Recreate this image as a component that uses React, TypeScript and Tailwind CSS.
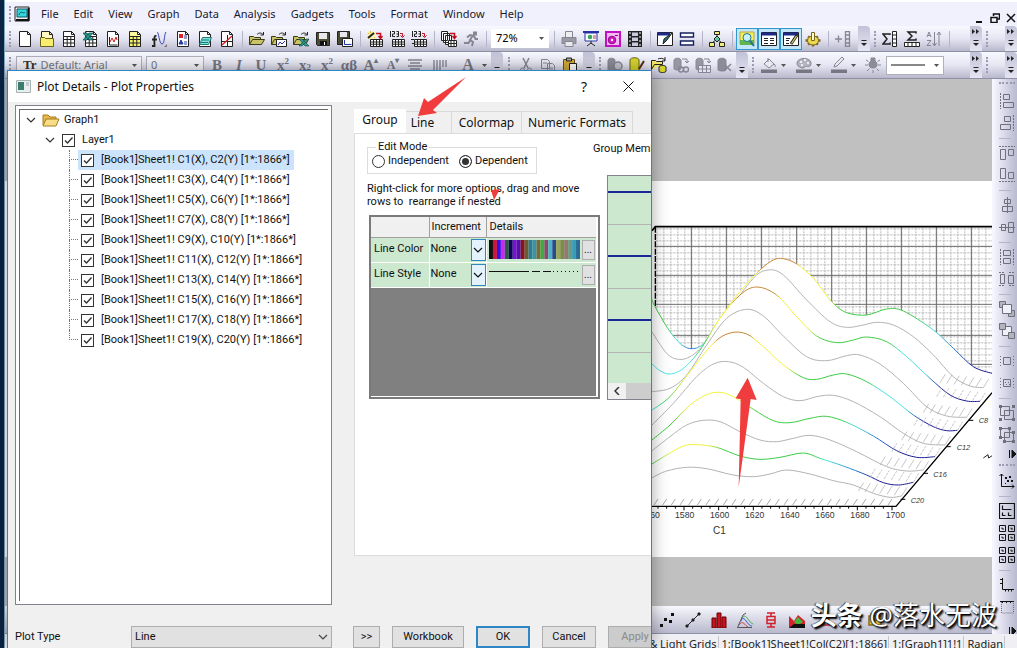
import { ReactNode } from "react";
import { twMerge } from "tailwind-merge";

const INK = "#222";
const DIM = "#858594";

const Icon = ({ children, size = 16 }: { children: ReactNode; size?: number }) => (
    <svg
        width={size}
        height={size}
        viewBox="0 0 16 16"
        fill="none"
        stroke={INK}
        strokeWidth="1"
        aria-hidden="true"
    >
        {children}
    </svg>
);

const Page = ({ fill = "#fff" }: { fill?: string }) => (
    <path d="M2.5.5h8l3 3v12h-11zM10.5.5v3h3" fill={fill} />
);

const Grid = ({ fill = "#fff" }: { fill?: string }) => (
    <path d="M2.5 5.5h11v10h-11zM2.5 8.5h11M2.5 12h11M6.2 5.5v10M9.8 5.5v10" fill={fill} />
);

const SmallGrid = () => (
    <path d="M3.5 8.5h12v7h-12zM3.5 11h12M3.5 13.2h12M6.5 8.5v7M9.5 8.5v7M12.5 8.5v7" fill="#fff" />
);

const RedHook = () => <path d="M9 2.5h4.5v4M11.5 5l2 2.5 2-2.5" stroke="#c01020" strokeWidth="1.5" />;

const SmallHook = () => <path d="M11 2.5h2.5v3M11.5 4.5l2 2 2-2" stroke="#c01020" />;

const Folder = () => (
    <path d="M.5 13.5v-8h4l1 1h6v2M.5 13.5l3-5h12l-3 5z" fill="#c9c46a" stroke="#3a3a14" />
);

const icons: Record<string, ReactNode> = {
    newProject: <Page />,
    newFolder: (
        <>
            <Page fill="#fff9c0" />
            <path d="M1.5 15.5v-9h4l1 1h8v8z" fill="#f7ee6d" stroke="#6b6420" />
        </>
    ),
    workbook: (
        <>
            <Page />
            <Grid />
        </>
    ),
    excel: (
        <>
            <Page />
            <Grid />
            <path d="M0 2h4l6 7H6zM6 2h4L4 9H0z" fill="#2e9a93" stroke="#0c4a48" strokeWidth=".7" />
        </>
    ),
    graph: (
        <>
            <Page />
            <path d="M4.5 6v8h8" />
            <path d="M5 11l2-4 2 4 2-5 1 3" stroke="#c22" />
        </>
    ),
    matrix: (
        <>
            <Page fill="#fbf99a" />
            <Grid fill="#f6f271" />
        </>
    ),
    fx: (
        <>
            <path d="M6 1c2 0 2 12 5 12s2-10 4-12" stroke="#3846b4" />
            <path d="M5.5 5c-3-1-2 4-2 10H1M1 8.5h5" strokeWidth="1.8" />
            <path d="M16 16v-3l-3 3z" fill="#777" stroke="none" />
        </>
    ),
    layout: (
        <>
            <Page />
            <path d="M4 3h4v4H4z" fill="#d22" stroke="none" />
            <path d="M4 13l2-4 2 4zM9 5h3M9 7h3M9 11h3M9 13h3" stroke="#22389c" fill="#22389c" />
        </>
    ),
    notes: (
        <>
            <Page />
            <path d="M5.5 6.5h9l-3 7h-9zM5 9h7M4 11.5h7" fill="#7fe3dc" stroke="#1b7c78" />
        </>
    ),
    func: (
        <>
            <Page />
            <path d="M8.5 4v11M3 10.5h10" />
            <path d="M3 14L13 5" stroke="#d22" strokeWidth="1.4" />
        </>
    ),
    open: (
        <>
            <Folder />
            <path d="M8 3.5c2-2 4-2 6 0M14.5 1v3h-3" />
        </>
    ),
    openTemplate: (
        <>
            <Folder />
            <path d="M8 3.5c2-2 4-2 6 0M14.5 1v3h-3" />
            <path d="M5.5 8.5h10v7h-10z" fill="#fff" />
            <path d="M7 14l2-3 2 2 3-3" stroke="#2233aa" />
        </>
    ),
    openExcel: (
        <>
            <Folder />
            <path d="M8 3.5c2-2 4-2 6 0M14.5 1v3h-3" />
            <path d="M6 8h3l7 7h-4zM13 8h3l-7 7H6z" fill="#2e9a93" stroke="#0c4a48" strokeWidth=".6" />
        </>
    ),
    save: (
        <>
            <path d="M1.5 1.5h13v13h-12l-1-1z" fill="#4c4c35" />
            <path d="M4 2h8v6H4z" fill="#e8e8ee" stroke="none" />
            <path d="M5 10h7v4H5z" fill="#111" stroke="none" />
            <path d="M9.5 11v3" stroke="#fff" />
        </>
    ),
    saveTemplate: (
        <>
            <path d="M.5.5h12v13h-12z" fill="#4c4c35" />
            <path d="M3 1h7v5H3z" fill="#e8e8ee" stroke="none" />
            <path d="M5.5 7.5h10v8h-10z" fill="#fff" />
            <path d="M7.5 9v4.5h7" stroke="#2233aa" />
        </>
    ),
    wizard: (
        <>
            <path d="M0 1h9v7H0z" fill="#fbf0b0" stroke="none" />
            <path d="M1 7L7 2" strokeWidth="2" />
            <path d="M1 2l1 1M7 6l1 1M3.5 0v2" stroke="#e0b52a" />
            <SmallGrid />
            <RedHook />
        </>
    ),
    ascii: (
        <>
            <path d="M1.5 0v6M3 .5h2.500v2.500H3.500v2.500h2.500M7.500.5h2v5h-2M7.500 3h2" />
            <SmallGrid />
            <SmallHook />
        </>
    ),
    asciiMulti: (
        <>
            <path d="M1.5 0v6M3 .5h2.500v2.500H3.500v2.500h2.500M7.500.5h2v5h-2M7.500 3h2" />
            <SmallGrid />
            <path d="M0 8.5h3M1 12.5h2" />
            <SmallHook />
        </>
    ),
    batch: (
        <>
            <path d="M.5.5h6v9h-6zM2.5 2.5h6v9h-6zM4.5 4.5h6v9h-6z" fill="#fff" />
            <path d="M7.5 9.5h8v6h-8zM7.5 12.5h8M10 9.5v6M13 9.5v6" fill="#fff" />
            <RedHook />
        </>
    ),
    run: (
        <path
            d="M11 1.5h2v2h-2zM11 5L7 4 4 6.5M9.5 5L7 9l3 2-1 4M7.5 9l-2 3H1M11 5l1.5 3H15"
            stroke={DIM}
            strokeWidth="2"
        />
    ),
    print: (
        <>
            <path d="M4.5 6V.5h7V6" fill="#eee" stroke={DIM} />
            <path d="M1 6.5h14v6H1z" fill="#9a9aa6" stroke={DIM} />
            <path d="M4 10.5h8v5H4z" fill="#e8e8ee" stroke={DIM} />
        </>
    ),
    slide: (
        <>
            <path d="M0 1h16" stroke="#2730a8" strokeWidth="2" />
            <path d="M2 2h12v8H2z" fill="#fff" stroke="#2730a8" />
            <circle cx="7" cy="6" r="2.3" fill="#39a85c" stroke="none" />
            <path d="M10 5h3M10 7h3" stroke="#c33" />
            <path d="M8 10v3M4 15l4-3 4 3" />
        </>
    ),
    record: (
        <>
            <path d="M1 1h14v14H1z" fill="#f8b8f4" stroke="#c211c2" strokeWidth="2" />
            <circle cx="7" cy="9" r="3.8" fill="#d415c8" stroke="#8a0a85" />
            <circle cx="7" cy="9" r="1.2" fill="#fff" stroke="none" />
            <path d="M10 4.5h3" stroke="#8a0a85" />
        </>
    ),
    film: (
        <>
            <path d="M1 0h14v16H1z" fill="#222" stroke="none" />
            <path d="M5 1.5h6v3.5H5zM5 6.5h6V10H5zM5 11.5h6V15H5z" fill="#c9c9e0" stroke="none" />
            <path d="M3 1v14M13 1v14" stroke="#fff" strokeDasharray="2 2" />
        </>
    ),
    script: (
        <>
            <path d="M.5 1.5h15v13H.5z" fill="#fff" />
            <path d="M1 3h12" stroke="#1d2b88" strokeWidth="3" />
            <path d="M15 2l-5 7-4 4 1-5z" fill="#2b6a74" />
        </>
    ),
    rows: (
        <path d="M1.5 2h13v4h-13zM1.5 10h13v4h-13z" fill="#fff" stroke="#15205e" strokeWidth="1.4" />
    ),
    tree: (
        <>
            <path d="M8 4v4L3 12M8 8l5 4" />
            <path d="M5.5.5h5v3h-5z" fill="#f4ee74" />
            <path d="M8 5l3 3-3 3-3-3z" fill="#5fcfa8" />
            <path d="M.5 11.5h5v4h-5zM10.5 11.5h5v4h-5z" fill="#eff07a" />
        </>
    ),
    finder: (
        <>
            <path d="M1 1h14v12H1z" fill="#f4ef5c" stroke="#b7aa3a" />
            <path d="M1 9h14v5H1z" fill="#61b54e" stroke="none" />
            <circle cx="8" cy="6.5" r="4" fill="#c6f3fb" stroke="#217488" />
            <path d="M11 10l4 5" stroke="#217488" strokeWidth="2" />
        </>
    ),
    results: (
        <>
            <path d="M.5 1.5h15v13H.5z" fill="#fff" />
            <path d="M1 3h14" stroke="#1d2b88" strokeWidth="3" />
            <path d="M3 7.5h4M9 7.5h4M3 9.5h4M9 9.5h4M3 12.5h4M9 12.5h4" />
        </>
    ),
    command: (
        <>
            <path d="M.5 1.5h15v13H.5z" fill="#fff" />
            <path d="M1 3h14" stroke="#1d2b88" strokeWidth="3" />
            <path d="M3 7.5h4M3 9.5h3M3 12.5h3" />
            <path d="M14 4l-6 9" stroke="#222" strokeWidth="3" />
            <path d="M13.5 5l-5 7.5" stroke="#e8dc66" strokeWidth="1.2" />
        </>
    ),
    gear: (
        <>
            <path
                d="M8 4v2M3 5.500l2 1.500M13 5.500l-2 1.500M.5 9.500H3M13 9.500h2.500M3 13.500l2-1.500M13 13.500l-2-1.500M8 13v2.500"
                stroke="#7b661d"
                strokeWidth="2.500"
            />
            <ellipse cx="8" cy="9.5" rx="5.5" ry="4.5" fill="#ecd94f" stroke="#7b661d" />
            <path d="M6.500 1.500h3v8h-3z" fill="#fff8c4" stroke="#7b661d" />
        </>
    ),
    addColumn: (
        <path d="M0 8h7M3.5 4.5v7M10.5.5h4v15h-4zM10.5 4h4M10.5 8h4M10.5 12h4" stroke={DIM} strokeWidth="1.3" />
    ),
    sumColumn: (
        <>
            <path d="M8 4V3H1l4 5-4 5h7v-1.5" strokeWidth="1.5" />
            <path d="M10.5.5h4v15h-4zM10.5 4h4M10.5 8h4M10.5 12h4" fill="#fff" />
        </>
    ),
    sumRow: (
        <>
            <path d="M12 2.5V1H4l4 4-4 4h8V7.5" strokeWidth="1.5" />
            <path d="M.5 11.5h15v4H.5zM4 11.5v4M8 11.5v4M12 11.5v4" fill="#fff" />
        </>
    ),
    sort: (
        <path d="M1 6l2-5 2 5M2 4.5h2M1 9.5h4l-4 5h4M8.5 1v13M6.5 12l2 3 2-3M13 15V1M11 4l2-3 2 3" stroke={DIM} />
    ),
    align: <path d="M1 3h14M3 6h10M1 9h14M3 12h10" stroke={DIM} strokeWidth="1.4" />,
    bars: <path d="M2 3v10M5 3v10M8 3v10M11 3v7M14 3v7" stroke={DIM} strokeWidth="1.4" />,
    cut: (
        <>
            <path d="M5 1l5 10M11 1L6 11" stroke={DIM} strokeWidth="1.5" />
            <circle cx="4.5" cy="13" r="2" stroke={DIM} />
            <circle cx="11.5" cy="13" r="2" stroke={DIM} />
        </>
    ),
    copy: (
        <path d="M1.5 2.5h6l2 2v7h-8zM7.5 6.5h5l2 2v7h-7zM3 6h4M9 11h4M9 13h4" stroke={DIM} />
    ),
    paste: (
        <>
            <path d="M1.5 2.5h11v12h-11z" fill="#d4ab35" stroke="#6c5417" />
            <path d="M4.5 1h5v3h-5z" fill="#aaa" />
            <path d="M7.5 6.5h7v9h-7z" fill="#fff" />
        </>
    ),
    dbGear: (
        <>
            <path d="M1 3.5c0-3 7-3 7 0v9c0 2-7 2-7 0z" fill="#8c8c99" stroke={DIM} />
            <circle cx="11" cy="9" r="4" fill="#c6c6d2" stroke={DIM} strokeWidth="1.5" />
        </>
    ),
    dbEdit: (
        <>
            <path d="M1 3c0-3 9-3 9 0v10c0 2-9 2-9 0z" fill="#d8d42d" stroke="#67631a" />
            <path d="M15 4l-5 8" stroke="#5b2b16" strokeWidth="2" />
        </>
    ),
    dbOpen: (
        <>
            <path d="M.5 12.5v-9h4l1 1h6v3" fill="#f3e967" />
            <path d="M.5 12.5l3-5h8" fill="#f3e967" />
            <path d="M8 10c0-2 7-2 7 0v4c0 2-7 2-7 0z" fill="#d8d42d" />
            <path d="M7 2c2-1 5-1 7 1M14 0v4h-3" />
        </>
    ),
    dbView: (
        <>
            <path d="M1 3.5c0-3 7-3 7 0v8c0 2-7 2-7 0z" fill="#9797a3" stroke={DIM} />
            <path d="M9 2h5v4M12 4l2 2 2-2" stroke={DIM} />
            <circle cx="8" cy="12.5" r="2.500" stroke={DIM} strokeWidth="1.4" />
            <circle cx="13" cy="12.5" r="2.500" stroke={DIM} strokeWidth="1.4" />
        </>
    ),
    dbGrid: (
        <>
            <path d="M1 3.5c0-3 7-3 7 0v8c0 2-7 2-7 0z" fill="#9797a3" stroke={DIM} />
            <path d="M9 2h5v4M12 4l2 2 2-2" stroke={DIM} />
            <path d="M3.5 8.5h12v7h-12zM3.5 12h12M7.5 8.5v7M11.5 8.5v7" stroke={DIM} fill="#e4e4ee" />
        </>
    ),
    dbCut: (
        <>
            <path d="M1 3.5c0-3 8-3 8 0v9c0 2-8 2-8 0z" fill="#8c8c99" stroke={DIM} />
            <path d="M14 7l-7 7M8 8l6 6" stroke={DIM} strokeWidth="1.5" />
        </>
    ),
    bucket: (
        <>
            <path d="M3 7l5-5 5 5-5 4zM7 1v4M13 7c2 1 1 3 1 3" stroke={DIM} fill="#e8e8f0" />
            <path d="M0 12.5h16v3.5H0z" fill="#777783" stroke="none" />
        </>
    ),
    palette: (
        <>
            <path d="M1 6c0-6 14-6 14 0s-5 2-6 4-8 1-8-4z" fill="#b4b4c0" stroke={DIM} />
            <path d="M4 5h2M8 3h2M11 6h2M5 8h2" stroke="#fff" strokeWidth="1.5" />
            <path d="M0 12.5h16v3.5H0z" fill="#777783" stroke="none" />
        </>
    ),
    pen: (
        <>
            <path d="M3 10l1-3 7-7 2 2-7 7z" stroke={DIM} fill="#e8e8f0" />
            <path d="M0 12.5h16v3.5H0z" fill="#777783" stroke="none" />
        </>
    ),
    bulb: (
        <>
            <path d="M6 4V1h4v3c3 2 3 7-2 7S3 6 6 4z" fill="#8c8c99" stroke={DIM} />
            <path d="M8 13v3M0 8h3M13 8h3M1 3l2.5 1.5M15 3l-2.5 1.5M2 14l2.5-2.5M14 14l-2.5-2.5" stroke={DIM} />
        </>
    ),
};

const side: Record<string, ReactNode> = {
    left: (
        <>
            <path d="M1.5 0v16" strokeDasharray="2 1" />
            <path d="M4.5 1.5h6v5h-6zM4.5 9.5h10v5h-10z" />
        </>
    ),
    right: (
        <>
            <path d="M14.5 0v16" strokeDasharray="2 1" />
            <path d="M5.5 1.5h6v5h-6zM1.5 9.5h10v5h-10z" />
        </>
    ),
    top: (
        <>
            <path d="M0 1.5h16" strokeDasharray="2 1" />
            <path d="M1.5 4.5h5v10h-5zM9.5 4.5h5v6h-5z" />
        </>
    ),
    bottom: (
        <>
            <path d="M0 14.5h16" strokeDasharray="2 1" />
            <path d="M1.5 1.5h5v10h-5zM9.5 5.5h5v6h-5z" />
        </>
    ),
    centerV: <path d="M8.5 0v16M5.5 2.5h6v4h-6zM3.5 9.5h10v5h-10z" />,
    centerH: <path d="M0 8.5h16M2.5 5.5h4v6h-4zM9.5 3.5h5v10h-5z" />,
    sameW: (
        <>
            <path d="M1.5 0v16M14.5 0v16" strokeDasharray="2 1" />
            <path d="M4.5 1.5h7v5h-7zM4.5 9.5h7v5h-7z" />
        </>
    ),
    sameH: (
        <>
            <path d="M0 1.5h6M10 1.5h6M0 14.5h6M10 14.500h6" strokeDasharray="2 1" />
            <path d="M1.5 3.5h4v9h-4zM9.5 4.5h5v8h-5z" />
        </>
    ),
    front: (
        <>
            <path d="M.5.5h6v6h-6zM9.5 9.5h6v6h-6z" fill="#b3b3bd" />
            <path d="M3.5 3.5h9v9h-9z" fill="#f0f0fa" />
        </>
    ),
    back: (
        <>
            <path d="M3.5 3.5h9v9h-9z" fill="#f0f0fa" />
            <path d="M.5.5h6v6h-6zM9.5 9.5h6v6h-6z" fill="#b3b3bd" />
        </>
    ),
    rect: (
        <>
            <path d="M4.5 4.5h7v7h-7z" />
            <path d="M1.5 3v12M14.5 3v12" strokeDasharray="1 2" />
        </>
    ),
    rectDots: (
        <>
            <path d="M4.5 4.5h7v7h-7z" />
            <path d="M6 7.5h4M7 9.5h4M1.5 3v12M14.5 3v12" strokeDasharray="1 2" />
        </>
    ),
    group: (
        <>
            <path d="M1.5 1.5h9v9h-9zM5.5 5.5h9v9h-9z" />
            <path d="M0 0h3v3H0zM13 0h3v3h-3zM0 13h3v3H0zM13 13h3v3h-3z" fill="#70707c" stroke="none" />
        </>
    ),
    ungroup: (
        <>
            <path d="M1.5 1.5h9v9h-9zM5.5 5.5h9v9h-9z" />
            <path d="M0 0h3v3H0zM9 0h3v3H9zM0 9h3v3H0zM13 4h3v3h-3zM4 13h3v3H4zM13 13h3v3h-3z" fill="#70707c" stroke="none" />
        </>
    ),
    rescale: (
        <>
            <path d="M2.5 1v12.5H15M.5 3l2-2 2 2M13 11.5l2 2-2 2" stroke="#111" />
            <path d="M6 4h2v2H6zM10 3h2v2h-2zM8 7h2v2H8zM12 7h2v2h-2zM6 10h1v1H6z" fill="#111" stroke="none" />
        </>
    ),
    panel1: (
        <path d="M.5.5h15v15H.5zM3.5 2.500v4h9M3.5 9.500v3h3M9.5 9.500v3h3" stroke="#111" strokeWidth="1.2" />
    ),
    panel4: (
        <path
            d="M.5.5h6v6h-6zM9.5.5h6v6h-6zM.5 9.5h6v6h-6zM9.5 9.5h6v6h-6zM3 2.500v1.500h2M12 2.500v1.500h2M3 11.500v1.500h2M12 11.500v1.500h2"
            stroke="#111"
        />
    ),
    axisL: <path d="M3.5 1v11.5H15M3.5 2.5H1M3.5 6.5H1M6.5 12.5v2M9.5 12.5v2M12.5 12.5v2" stroke="#111" />,
    axisBox: (
        <>
            <path d="M1 2.5h14M3.5 2v2M7.5 2v2M11.5 2v2" stroke="#111" />
            <path d="M2.5 3v11h12V3" strokeDasharray="1 1" />
        </>
    ),
};

const plots: { name: string; art: ReactNode }[] = [
    { name: "Scatter", art: <path d="M1 12h3v3H1zM5 6h3v3H5zM10 8h3v3h-3zM12 1h3v3h-3z" fill="#111" stroke="none" /> },
    { name: "Line + Symbol", art: <path d="M2 14l6-6 6-6M1 13h2v2H1zM7 7h2v2H7zM13 1h2v2h-2z" fill="#111" /> },
    { name: "Column", art: <path d="M1 6h4v10H1zM6 1h4v15H6zM11 5h4v11h-4z" fill="#c81420" stroke="#600" /> },
    {
        name: "3D Waterfall",
        art: (
            <>
                <path d="M.5 15.5L6 3l3-2M.5 15.5H15" stroke="#555" />
                <path d="M4 9c3-8 6 5 11 5" stroke="#3b59c9" />
                <path d="M5 6c4-6 6 4 11 6" stroke="#3cae4f" />
                <path d="M2 13c4-6 6 1 9 2" stroke="#c44" />
            </>
        ),
    },
    { name: "Box Chart", art: <path d="M4 1h8M8 1v3M4 4.5h8v7H4zM4 8h8M8 11.5V15M4 15h8" stroke="#d0202c" strokeWidth="1.5" /> },
    {
        name: "Area",
        art: (
            <>
                <path d="M0 16V4l5 5 4-6 7 6v7z" fill="#d81f2a" stroke="none" />
                <path d="M5 10l4-5 5 5-5 3z" fill="#40b83c" stroke="none" />
                <path d="M0 16l5-4h11v4z" fill="#111" stroke="none" />
            </>
        ),
    },
    { name: "Contour", art: <path d="M3 13L13 3l2 10zM3 13H1" stroke="#d0202c" strokeWidth="1.5" /> },
    { name: "Vector", art: <path d="M4 2l9 7-4 1 2 5-3-4-4 2z" fill="#d0202c" stroke="#d0202c" /> },
    { name: "Image", art: <path d="M2 4h12v9H2zM4 4V1M12 4V1M8 6v5M5 8h6" stroke="#8d6a10" fill="#e8c637" strokeWidth="1.5" /> },
];

const Tool = ({ name, className, children }: { name: string; className?: string; children?: ReactNode }) => (
    <button
        aria-label={name}
        className={twMerge("flex h-6 w-[22px] shrink-0 items-center justify-center", className)}
    >
        {children ?? <Icon>{icons[name]}</Icon>}
    </button>
);

const Sep = () => (
    <span className="flex w-2 shrink-0 justify-center">
        <span className="h-4 w-px bg-[#b4b4c8]" />
    </span>
);

const Grip = ({ className }: { className?: string }) => (
    <span className={twMerge("flex w-[9px] shrink-0 justify-center", className)}>
        <span className="h-4 border-l-2 border-dotted border-[#9a9ab4]" />
    </span>
);

const Cap = ({ more, className }: { more?: boolean; className?: string }) => (
    <span
        className={twMerge(
            "flex w-3 shrink-0 flex-col items-center justify-end self-stretch rounded-tr-sm bg-gradient-to-b from-[#c3c3d8] to-[#e4e4f2] pb-1",
            className
        )}
    >
        <svg width="8" height="18" viewBox="0 0 8 18" aria-hidden="true">
            {more && <path d="M0 0l3 2.5L0 5M4 0l3 2.5L4 5" fill="#222" />}
            <path d="M1.5 11.5h5" stroke="#222" />
            <path d="M1 14h6l-3 3z" fill="#222" />
        </svg>
    </span>
);

const Caret = () => (
    <svg width="5" height="3" viewBox="0 0 5 3" className="pointer-events-none shrink-0" aria-hidden="true">
        <path d="M0 0h5L2.5 3z" fill="#555" />
    </svg>
);

const Combo = ({ label, value, className }: { label: string; value: string; className?: string }) => (
    <span className={twMerge("relative flex h-[19px] shrink-0 items-center border border-[#b0b0bc] bg-[#f4f4fa]", className)}>
        <select aria-label={label} className="h-full w-full appearance-none bg-transparent px-1 outline-none">
            <option>{value}</option>
        </select>
        <span className="pointer-events-none absolute inset-y-0 right-1 flex items-center">
            <Caret />
        </span>
    </span>
);

const menus = ["File", "Edit", "View", "Graph", "Data", "Analysis", "Gadgets", "Tools", "Format", "Window", "Help"];

const MenuBar = () => (
    <nav className="flex h-6 shrink-0 items-center bg-[#f1f1fe] text-[11px] text-[#1a1a2a]">
        <Grip />
        <svg width="16" height="16" viewBox="0 0 16 16" className="mr-[11px]" aria-hidden="true">
            <path d="M1 1h14v14H1z" fill="#eee" stroke="#222" />
            <path d="M3 3h10v8H3z" fill="#37d5dc" stroke="#0d5b66" />
            <path d="M5 9c2-6 4 0 6-3" fill="none" stroke="#0d5b66" />
            <path d="M2 14h13M14.5 2v13" stroke="#111" strokeWidth="2" />
        </svg>
        <ul className="flex gap-[15px]">
            {menus.map((m) => (
                <li key={m}>
                    <button>{m}</button>
                </li>
            ))}
        </ul>
        <div className="ml-auto flex gap-1 self-end">
            <Tool name="Minimize" className="h-4 w-3">
                <svg width="10" height="10" viewBox="0 0 10 10"><path d="M2 9h6" stroke="#111" strokeWidth="2" /></svg>
            </Tool>
            <Tool name="Restore" className="h-4 w-3">
                <svg width="10" height="10" viewBox="0 0 10 10"><path d="M3.5 3V1h6v5h-2M1 4.5h6v5H1z" fill="none" stroke="#111" strokeWidth="1.5" /></svg>
            </Tool>
            <Tool name="Close" className="h-4 w-3">
                <svg width="10" height="10" viewBox="0 0 10 10"><path d="M1 1l8 8M9 1L1 9" stroke="#111" strokeWidth="1.5" /></svg>
            </Tool>
        </div>
    </nav>
);

const barStyle =
    "flex shrink-0 items-center overflow-hidden border-b border-[#8f8fa6] bg-gradient-to-b from-[#f8f8ff] via-[#e6e6f3] to-[#b9b9cd]";

const StandardBar = () => (
    <div className={twMerge(barStyle, "h-[26px]")}>
        <Grip />
        {["newProject", "newFolder", "workbook", "excel", "graph", "matrix"].map((n) => (
            <Tool key={n} name={n} />
        ))}
        <Tool name="fx" className="w-[26px]" />
        {["layout", "notes", "func"].map((n) => (
            <Tool key={n} name={n} />
        ))}
        <Sep />
        {["open", "openTemplate", "openExcel", "save", "saveTemplate"].map((n) => (
            <Tool key={n} name={n} />
        ))}
        <Sep />
        {["wizard", "ascii", "asciiMulti"].map((n) => (
            <Tool key={n} name={n} />
        ))}
        <Sep />
        {["batch", "run"].map((n) => (
            <Tool key={n} name={n} />
        ))}
        <Sep />
        <Combo label="Zoom" value="72%" className="mx-px w-[58px] border-transparent bg-white text-[11px]" />
        <Sep />
        {["print", "slide", "record", "film"].map((n) => (
            <Tool key={n} name={n} />
        ))}
        <Sep />
        <Tool name="script" />
        <Tool name="rows" />
        <Sep />
        <Tool name="tree" />
        <Sep />
        {["finder", "results", "command"].map((n) => (
            <Tool key={n} name={n} className="h-[22px] border border-[#3399cc] bg-[#c5e6f8]" />
        ))}
        <Tool name="gear" />
        <Sep />
        <Tool name="addColumn" />
        <Cap className="ml-1" />
        <Grip />
        {["sumColumn", "sumRow", "sort"].map((n) => (
            <Tool key={n} name={n} />
        ))}
        <Sep />
        <Cap more className="ml-auto" />
        <Grip className="mr-[14px]" />
        <Cap more />
    </div>
);

const FormatBar = () => (
    <div className={twMerge(barStyle, "h-[27px] text-[#777783]")}>
        <Grip />
        <span className="relative ml-[2px] flex h-[19px] w-[126px] shrink-0 items-center border border-[#b0b0bc] bg-[#f4f4fa] pl-[6px]">
            <span className="font-['Liberation_Serif',serif] text-[13px] font-bold text-[#333]">Tr</span>
            <select aria-label="Font" className="h-full w-full appearance-none bg-transparent pl-1 text-[11px] outline-none">
                <option>Default: Arial</option>
            </select>
            <span className="pointer-events-none absolute inset-y-0 right-1 flex items-center">
                <Caret />
            </span>
        </span>
        <Combo label="Font size" value="0" className="mr-[2px] ml-1 w-[58px] text-[11px]" />
        <div className="flex font-['Liberation_Serif',serif] text-[15px] leading-none font-bold">
            <Tool name="Bold">B</Tool>
            <Tool name="Italic" className="italic">I</Tool>
            <Tool name="Underline" className="underline">U</Tool>
            <Tool name="Superscript">x<sup className="text-[9px]">2</sup></Tool>
            <Tool name="Subscript">x<sub className="text-[9px]">2</sub></Tool>
            <Tool name="Superscript and Subscript">x<sup className="text-[9px]">2</sup></Tool>
            <Tool name="Greek">αβ</Tool>
            <Tool name="Increase Font">A<sup className="text-[8px]">▴</sup></Tool>
            <Tool name="Decrease Font" className="text-[12px]">A<sup className="text-[8px]">▾</sup></Tool>
        </div>
        <Tool name="align" />
        <Tool name="bars" className="w-[28px]" />
        <Tool name="Font Color" className="w-[28px] font-['Liberation_Serif',serif] text-[16px] leading-none font-bold">
            A
        </Tool>
        <Caret />
        <Cap className="ml-1" />
        <Grip className="w-3" />
        {["cut", "copy", "paste"].map((n) => (
            <Tool key={n} name={n} />
        ))}
        <Cap className="ml-[2px]" />
        <Grip />
        {["dbGear", "dbEdit", "dbOpen", "dbView", "dbGrid", "dbCut"].map((n) => (
            <Tool key={n} name={n} />
        ))}
        <Cap />
        <Grip />
        {["bucket", "palette", "pen"].map((n) => (
            <span key={n} className="flex w-[35px] shrink-0 items-center">
                <Tool name={n} className="w-6" />
                <Caret />
            </span>
        ))}
        <Tool name="bulb" />
        <span className="relative ml-[2px] flex h-[19px] w-[58px] shrink-0 items-center justify-between border border-[#b0b0bc] bg-white px-1">
            <svg width="34" height="2" aria-hidden="true"><path d="M0 1h34" stroke="#111" /></svg>
            <Caret />
        </span>
        <Cap more className="ml-auto" />
        <Grip className="mr-[14px]" />
        <Cap more />
    </div>
);

type Pt = [number, number];

// Catmull-Rom through the sample points
const smooth = (p: Pt[]) => {
    let d = `M${p[0][0]} ${p[0][1]}`;
    for (let i = 0; i < p.length - 1; i++) {
        const a = p[i - 1] ?? p[i];
        const b = p[i];
        const c = p[i + 1];
        const e = p[i + 2] ?? c;
        d += `C${b[0] + (c[0] - a[0]) / 6} ${b[1] + (c[1] - a[1]) / 6} ${c[0] - (e[0] - b[0]) / 6} ${
            c[1] - (e[1] - b[1]) / 6
        } ${c[0]} ${c[1]}`;
    }
    return d;
};

type Curve = { pts: Pt[]; stops?: [number, string][] };

const GREEN = "#3ccc44";
const YELLOW = "#f2f23c";
const ORANGE = "#c98534";
const CYAN = "#4ce4e4";
const NAVY = "#1c1c94";

const curves: Curve[] = [
    {
        pts: [[36, 268], [45, 290], [90, 365], [130, 408], [165, 415], [195, 395], [240, 325], [300, 245], [360, 180], [400, 150], [430, 146], [470, 162], [520, 205], [575, 275], [620, 308], [680, 315], [740, 297], [790, 303], [880, 360], [940, 415], [1000, 470], [1056, 490]],
        stops: [[36, GREEN], [75, GREEN], [110, CYAN], [155, "#2b66c8"], [190, CYAN], [210, GREEN], [240, YELLOW], [345, YELLOW], [365, ORANGE], [465, ORANGE], [480, YELLOW], [560, YELLOW], [600, GREEN], [820, GREEN], [880, CYAN], [940, "#2e86d0"], [1000, NAVY]],
    },
    {
        pts: [[36, 366], [80, 430], [115, 448], [150, 440], [190, 405], [260, 310], [340, 205], [385, 180], [430, 195], [500, 270], [570, 335], [620, 352], [670, 345], [710, 337], [760, 345], [820, 380], [880, 435], [940, 500], [990, 528], [1030, 533]],
    },
    {
        pts: [[36, 462], [60, 482], [90, 492], [130, 475], [180, 420], [240, 325], [300, 255], [350, 231], [410, 255], [470, 320], [530, 378], [590, 398], [640, 390], [680, 381], [740, 395], [800, 440], [870, 505], [930, 555], [980, 573], [1020, 574]],
        stops: [[36, CYAN], [150, CYAN], [190, GREEN], [225, YELLOW], [270, YELLOW], [285, ORANGE], [405, ORANGE], [425, YELLOW], [500, YELLOW], [540, GREEN], [740, GREEN], [790, CYAN], [850, CYAN], [900, NAVY]],
    },
    {
        pts: [[36, 545], [90, 535], [140, 495], [200, 405], [260, 325], [320, 298], [370, 318], [430, 378], [500, 440], [560, 452], [620, 437], [660, 435], [720, 462], [790, 520], [860, 590], [920, 618], [980, 622]],
    },
    {
        pts: [[36, 600], [90, 560], [150, 485], [220, 400], [270, 369], [320, 372], [370, 410], [430, 465], [490, 503], [530, 508], [580, 495], [620, 492], [680, 515], [750, 560], [820, 615], [880, 650], [920, 662], [952, 661]],
        stops: [[36, CYAN], [80, GREEN], [140, YELLOW], [215, YELLOW], [235, ORANGE], [330, ORANGE], [345, YELLOW], [440, YELLOW], [480, GREEN], [680, GREEN], [720, CYAN], [790, CYAN], [850, NAVY]],
    },
    {
        pts: [[36, 645], [100, 580], [170, 500], [220, 462], [265, 455], [310, 472], [370, 520], [430, 560], [480, 572], [530, 560], [580, 556], [640, 575], [720, 620], [790, 670], [850, 700], [915, 705]],
    },
    {
        pts: [[36, 690], [90, 645], [150, 585], [200, 554], [240, 547], [280, 560], [340, 598], [400, 632], [450, 638], [510, 625], [560, 619], [620, 637], [700, 678], [770, 722], [830, 742], [885, 740]],
        stops: [[36, GREEN], [100, GREEN], [140, YELLOW], [300, YELLOW], [350, GREEN], [600, GREEN], [650, CYAN], [720, "#2b66c8"], [780, NAVY]],
    },
    {
        pts: [[36, 722], [90, 680], [140, 645], [190, 631], [240, 635], [300, 665], [360, 690], [410, 695], [460, 685], [510, 676], [570, 690], [650, 725], [740, 770], [800, 783], [850, 780]],
    },
    {
        pts: [[36, 762], [80, 735], [130, 708], [170, 704], [230, 712], [300, 738], [360, 748], [420, 742], [490, 729], [540, 745], [610, 768], [680, 795], [730, 818], [775, 825], [820, 817]],
        stops: [[36, GREEN], [90, YELLOW], [200, YELLOW], [250, GREEN], [520, GREEN], [560, CYAN], [640, "#2b86d0"], [700, NAVY]],
    },
    {
        pts: [[36, 803], [80, 783], [140, 772], [200, 776], [280, 795], [340, 800], [390, 792], [440, 780], [510, 792], [580, 812], [640, 825], [700, 850], [750, 862], [785, 858]],
    },
];

const majorX = [154, 259, 364, 470, 575, 679, 784, 889, 994];
const majorY = [109, 196, 283, 376, 463];
const xLabels: [number, string][] = [[134, "1580"], [239, "1600"], [344, "1620"], [450, "1640"], [555, "1660"], [660, "1680"], [766, "1700"]];
const zLabels: [number, number, string][] = [[1016, 640, "C8"], [950, 720, "C12"], [880, 800, "C16"], [812, 878, "C20"]];

// Three drawing units make one pixel
const Waterfall = () => (
    <svg viewBox="36 -87 1020 1128" className="h-[376px] w-[340px] shrink-0" role="img" aria-label="3D waterfall graph">
        <defs>
            <pattern id="minor" x="49" y="55" width="21" height="18" patternUnits="userSpaceOnUse">
                <path d="M1.5 0v18M0 1.5h21" stroke="#b8b8b8" strokeWidth="3" strokeDasharray="6 3" />
            </pattern>
            {curves.map(
                (c, key) =>
                    c.stops && (
                        <linearGradient key={key} id={`g${key}`} gradientUnits="userSpaceOnUse" x1="36" y1="0" x2="1056" y2="0">
                            {c.stops.map(([x, color], i) => (
                                <stop key={i} offset={(x - 36) / 1020} stopColor={color} />
                            ))}
                        </linearGradient>
                    )
            )}
        </defs>
        <path d="M46 50h1010v445H46z" fill="url(#minor)" />
        <path
            d={majorX.map((x) => `M${x} 50V480`).join("") + majorY.map((y) => `M46 ${y}H1056`).join("")}
            stroke="#6c6c6c"
            strokeWidth="3"
        />
        <path d="M36 62L46 50H1056" fill="none" stroke="#000" strokeWidth="5" />
        <path d="M46 50v242" stroke="#000" strokeWidth="4" strokeDasharray="18 4" />
        {curves.map((c, key) => {
            const d = smooth(c.pts);
            const last = c.pts[c.pts.length - 1];
            return (
                <g key={key}>
                    <path d={`${d}L${last[0]} 880H36z`} fill="#fff" />
                    <path d={d} fill="none" stroke={c.stops ? `url(#g${key})` : "#b4b4b4"} strokeWidth="3" />
                </g>
            );
        })}
        {curves.slice(1).map((c, key) => {
            const [x, y] = c.pts[c.pts.length - 1];
            return (
                <path
                    key={key}
                    d={[0, 22, 44, 66, 88, 110, 130].map((o) => `M${x - o} ${y - o / 9}l16 -26`).join("")}
                    stroke="#aaa"
                    strokeWidth="2"
                    strokeDasharray={key % 2 ? "9 3" : undefined}
                />
            );
        })}
        <path
            d={Array.from({ length: 28 }, (_, i) => `M${42 + i * 26} 885l12 -18`).join("")}
            stroke="#aaa"
            strokeWidth="3"
        />
        <path d="M36 889H768L1056 548" fill="none" stroke="#000" strokeWidth="4" />
        <path
            d={
                Array.from({ length: 28 }, (_, i) => `M${54 + i * 26} 889v${(i + 1) % 4 === 0 ? 12 : 7}`).join("") +
                "M986 631h14M918 710h14M850 790h14M782 868h14"
            }
            stroke="#000"
            strokeWidth="3"
        />
        <g fill="#333" fontSize="26" textAnchor="middle" fontFamily="Liberation Sans, sans-serif">
            <text x="45" y="924">60</text>
            {xLabels.map(([x, t]) => (
                <text key={t} x={x} y="924">{t}</text>
            ))}
            <text x="238" y="972" fontSize="30">C1</text>
        </g>
        <g fill="#333" fontSize="22" fontStyle="italic" fontFamily="Liberation Sans, sans-serif">
            {zLabels.map(([x, y, t]) => (
                <text key={t} x={x} y={y}>{t}</text>
            ))}
        </g>
        <path d="M1030 744l14 -10 2 10 12 -8" fill="none" stroke="#222" strokeWidth="3" />
        <path d="M323 503l27 67-18-3-36 265 6-264-15-3z" fill="#f03c3c" />
    </svg>
);

const sideGroups = [
    ["left", "right"],
    ["top", "bottom"],
    ["centerV", "centerH"],
    ["sameW", "sameH"],
    ["front", "back"],
    ["rect", "rectDots"],
    ["group", "ungroup"],
];

const SideIcon = ({ name }: { name: string }) => (
    <button aria-label={name} className="flex h-[22px] shrink-0 items-center">
        <svg width="16" height="16" viewBox="0 0 16 16" fill="none" stroke="#70707c" aria-hidden="true">
            {side[name]}
        </svg>
    </button>
);

const SideSep = () => (
    <span className="flex h-2 shrink-0 items-center">
        <span className="h-px w-3 bg-[#b4b4c8]" />
    </span>
);

const SideMore = () => (
    <svg width="16" height="10" viewBox="0 0 16 10" className="shrink-0 self-end" aria-hidden="true">
        <path d="M8.5 1v8M11 1v8l4-4z" stroke="#111" fill="#111" />
    </svg>
);

const SideBar = () => (
    <aside className="flex w-[25px] shrink-0 flex-col overflow-hidden border-l-2 border-[#f6f6fc] bg-gradient-to-r from-[#f4f4ff] to-[#b9b9d0] pt-[3px] pl-[5px]">
        <span className="mb-1 h-1 w-4 shrink-0 border-t-2 border-dotted border-[#9a9ab4]" />
        {sideGroups.map((g, key) => (
            <div key={key} className="flex flex-col">
                {key > 0 && <SideSep />}
                {g.map((n) => (
                    <SideIcon key={n} name={n} />
                ))}
            </div>
        ))}
        <span className="h-[3px] shrink-0" />
        <SideMore />
        <span className="mt-[5px] mb-1 h-[2px] w-4 shrink-0 border-t-2 border-dotted border-[#9a9ab4]" />
        <SideIcon name="rescale" />
        <SideSep />
        <SideIcon name="panel1" />
        <SideIcon name="panel4" />
        <SideIcon name="panel4" />
        <SideSep />
        <SideIcon name="axisL" />
        <SideIcon name="axisBox" />
        <span className="h-2 shrink-0" />
        <SideMore />
    </aside>
);

const Chevron = ({ className }: { className?: string }) => (
    <svg width="10" height="6" viewBox="0 0 10 6" className={twMerge("shrink-0", className)} aria-hidden="true">
        <path d="M1 1l4 4 4-4" fill="none" stroke="currentColor" strokeWidth="1.2" />
    </svg>
);

const Check = ({ label, selected }: { label: string; selected?: boolean }) => (
    <label className={twMerge("flex h-5 items-center gap-[7px] pr-1 pl-[3px]", selected && "bg-[#cce4fb]")}>
        <span className="grid h-[13px] w-[13px]">
            <input
                type="checkbox"
                defaultChecked
                className="peer col-start-1 row-start-1 appearance-none border border-[#333] bg-white"
            />
            <svg viewBox="0 0 13 13" className="pointer-events-none invisible col-start-1 row-start-1 peer-checked:visible" aria-hidden="true">
                <path d="M3 6.5l2.5 2.5L10.5 3.5" fill="none" stroke="#333" strokeWidth="1.4" />
            </svg>
        </span>
        <span className="whitespace-nowrap">{label}</span>
    </label>
);

const PlotTree = () => (
    <div className="w-[317px] shrink-0 border border-[#82828a] bg-white p-[3px]">
        <div className="h-full border-t border-l border-[#696969]">
            <div className="flex h-5 items-center pl-[6px]">
                <Chevron className="text-[#333]" />
                <svg width="18" height="14" viewBox="0 0 18 14" className="ml-[6px]" aria-hidden="true">
                    <path d="M1 12V2h5l2 2h6v2" fill="#e6b84a" stroke="#a67c1e" />
                    <path d="M1 13l3-7h13l-3 7z" fill="#f9dd86" stroke="#a67c1e" />
                </svg>
                <span className="ml-1">Graph1</span>
            </div>
            <div className="flex h-5 items-center pl-[25px]">
                <Chevron className="mr-1 text-[#333]" />
                <Check label="Layer1" />
            </div>
            <ul className="ml-[49px] flex flex-col">
                {Array.from({ length: 10 }).map((_, i) => (
                    <li key={i} className="flex">
                        <span className="flex w-[9px] shrink-0 flex-col">
                            <span className="h-[10px] border-b border-l border-dotted border-[#777]" />
                            {i < 9 && <span className="h-[10px] border-l border-dotted border-[#777]" />}
                        </span>
                        <Check
                            label={`[Book1]Sheet1! C${2 * i + 1}(X), C${2 * i + 2}(Y) [1*:1866*]`}
                            selected={i === 0}
                        />
                    </li>
                ))}
            </ul>
        </div>
    </div>
);

const increments = [
    "#111", "#d0143c", "#3a10e0", "#c828f0", "#2b5a4c", "#0a0a50", "#7a10d8", "#5410a8", "#8a1020", "#6e5a30", "#2f7a94", "#3a94a8", "#7a6a3a", "#42a840",
    "#8a4a6c", "#4ab4cc", "#2a4a8c", "#9aa85a", "#7c8c4c", "#96786c", "#6e9a84", "#3a9cb8", "#2a6c94",
];

const NoneSelect = ({ label }: { label: string }) => (
    <span className="relative flex h-[23px] items-center">
        <select aria-label={label} className="h-full w-full appearance-none bg-transparent pl-px outline-none">
            <option>None</option>
        </select>
        <span className="pointer-events-none absolute right-0 flex h-[22px] w-[15px] items-center justify-center border border-[#2f86c4] bg-[#e3f2fc]">
            <Chevron />
        </span>
    </span>
);

const Dots = ({ label }: { label: string }) => (
    <button aria-label={label} className="h-5 w-[13px] border border-[#adadad] bg-[#e1e1e1] text-[10px] leading-none">
        ...
    </button>
);

const GroupTable = () => (
    <div className="mt-[7px] ml-[2px] h-[184px] w-[231px] border-2 border-[#7a7a7a] bg-white pr-[2px] pb-px">
        <div className="h-full bg-[#808080]">
            <table className="w-full table-fixed border-collapse bg-[#cce8cf] text-left">
                <colgroup>
                    <col className="w-[58px]" />
                    <col className="w-[57px]" />
                    <col />
                </colgroup>
                <thead className="bg-[#f0f0f0]">
                    <tr className="h-5 border-b border-[#a0a0a0]">
                        <th className="border-r border-[#a0a0a0]" />
                        <th className="border-r border-[#a0a0a0] pl-[2px] font-normal">Increment</th>
                        <th className="pl-[3px] font-normal">Details</th>
                    </tr>
                </thead>
                <tbody>
                    <tr className="h-[25px] border-b border-white">
                        <td className="border-r border-white pl-[3px] whitespace-nowrap">Line Color</td>
                        <td className="border-r border-white"><NoneSelect label="Line color increment" /></td>
                        <td>
                            <div className="flex items-center gap-[2px] pl-[2px]">
                                <svg width="91" height="19" viewBox="0 0 92 19" preserveAspectRatio="none" className="shrink-0" aria-hidden="true">
                                    {increments.map((c, i) => (
                                        <rect key={i} x={i * 4} width="4" height="19" fill={c} />
                                    ))}
                                </svg>
                                <Dots label="Line color details" />
                            </div>
                        </td>
                    </tr>
                    <tr className="h-[25px] border-b border-white">
                        <td className="border-r border-white pl-[3px] whitespace-nowrap">Line Style</td>
                        <td className="border-r border-white"><NoneSelect label="Line style increment" /></td>
                        <td>
                            <div className="flex items-center gap-[2px] pl-[2px]">
                                <svg width="91" height="19" viewBox="0 0 91 19" stroke="#111" className="shrink-0" aria-hidden="true">
                                    <path d="M0 6.5h40" />
                                    <path d="M43 6.5h20" strokeDasharray="8 3" />
                                    <path d="M64 6.5h27" strokeDasharray="1 3" />
                                </svg>
                                <Dots label="Line style details" />
                            </div>
                        </td>
                    </tr>
                </tbody>
            </table>
        </div>
    </div>
);

const Members = () => (
    <div className="min-w-0 flex-1">
        <p className="h-8 leading-3 whitespace-nowrap">Group Members</p>
        <div className="ml-[14px] flex h-[225px] w-[120px] flex-col border border-[#82828a] bg-[#cce8cf]">
            {[0, 1, 2].map((i) => (
                <div key={i} className="flex flex-col">
                    <span className={i ? "h-8 border-b-2 border-[#1a2a94]" : "h-[17px] border-b-2 border-[#1a2a94]"} />
                    <span className="h-8 border-b border-[#b4b4b4]" />
                </div>
            ))}
            <div className="mt-auto flex h-4 bg-[#f0f0f0]">
                <button aria-label="Scroll left" className="flex w-[18px] items-center justify-center">
                    <svg width="6" height="8" viewBox="0 0 6 8"><path d="M5 0L1 4l4 4" fill="none" stroke="#333" strokeWidth="1.5" /></svg>
                </button>
                <span className="flex-1 bg-[#cdcdcd]" />
            </div>
        </div>
    </div>
);

const Radio = ({ label, checked }: { label: string; checked?: boolean }) => (
    <label className="flex items-center gap-[3px]">
        <input
            type="radio"
            name="mode"
            defaultChecked={checked}
            className="h-[13px] w-[13px] appearance-none rounded-full border border-[#333] bg-white shadow-[inset_0_0_0_2px_white] checked:bg-[#333]"
        />
        {label}
    </label>
);

const tabs = [
    { name: "Line", width: "w-[46px] pr-[12px]" },
    { name: "Colormap", width: "w-[70px]" },
    { name: "Numeric Formats", width: "w-[111px]" },
];

const TabPanel = () => (
    <div className="flex min-w-0 flex-1 flex-col pt-1 pb-[49px]">
        <div
            role="tablist"
            className="flex h-6 shrink-0 items-end font-['Noto_Sans',sans-serif] text-[12px] whitespace-nowrap"
        >
            <button role="tab" aria-selected="true" className="h-6 w-[52px] shrink-0 bg-white pb-[2px]">
                Group
            </button>
            {tabs.map((t) => (
                <button
                    key={t.name}
                    role="tab"
                    aria-selected="false"
                    className={twMerge("h-[22px] shrink-0 border-t border-r border-[#d9d9d9] bg-[#f0f0f0]", t.width)}
                >
                    {t.name}
                </button>
            ))}
        </div>
        <div className="flex flex-1 border border-r-0 border-[#dcdcdc] bg-white pt-[9px] pl-3">
            <div className="w-[226px] shrink-0">
                <fieldset className="-mt-[2px] flex h-[33px] w-[170px] items-center gap-[10px] border border-[#dcdcdc] px-1 pb-1">
                    <legend className="ml-1 px-[2px] leading-3">Edit Mode</legend>
                    <Radio label="Independent" />
                    <Radio label="Dependent" checked />
                </fieldset>
                <p className="mt-2 leading-[13px] whitespace-pre">
                    {"Right-click for more options, drag and move\nrows to  rearrange if nested"}
                </p>
                <GroupTable />
            </div>
            <Members />
        </div>
    </div>
);

const dialogButton = "h-[22px] shrink-0 border border-[#adadad] bg-[#e1e1e1]";

const PlotDetails = () => (
    <section
        role="dialog"
        aria-label="Plot Details"
        className="absolute top-[70px] bottom-0 left-[7px] flex w-[645px] flex-col overflow-hidden border border-b-0 border-[#2f86c4] bg-[#f0f0f0] font-['Roboto',sans-serif] text-[11px] text-[#111] shadow-[0_0_16px_rgba(0,0,0,0.35)]"
    >
        <header className="flex h-[31px] shrink-0 items-center bg-white pl-2 font-['Noto_Sans',sans-serif] text-[12px]">
            <svg width="15" height="13" viewBox="0 0 15 13" aria-hidden="true">
                <path d="M.5.5h14v12H.5z" fill="#e8eeee" stroke="#a8b4b4" />
                <path d="M2 2h6v8H2z" fill="#3b7c6c" />
                <path d="M10 3h3M10 5h3" stroke="#9ab" />
            </svg>
            <h1 className="ml-[6px]">Plot Details - Plot Properties</h1>
            <button aria-label="Help" className="ml-auto w-10 text-[14px]">?</button>
            <button aria-label="Close" className="mr-[3px] ml-1 flex w-10 justify-center">
                <svg width="11" height="11" viewBox="0 0 11 11"><path d="M.5.5l10 10M10.5.5l-10 10" stroke="#111" /></svg>
            </button>
        </header>
        <div className="flex min-h-0 flex-1 gap-[22px] pt-[3px] pl-[7px]">
            <PlotTree />
            <TabPanel />
        </div>
        <footer className="mt-[21px] flex h-[22px] shrink-0 items-center pl-[7px] whitespace-nowrap">
            <label htmlFor="plot-type" className="w-[116px] shrink-0">Plot Type</label>
            <span className="relative flex w-[201px] shrink-0 items-center">
                <select
                    id="plot-type"
                    className="h-[22px] w-full appearance-none border border-[#adadad] bg-[#e1e1e1] px-[3px]"
                >
                    <option>Line</option>
                </select>
                <Chevron className="pointer-events-none absolute right-1 text-[#444]" />
            </span>
            <button className={twMerge(dialogButton, "ml-[21px] w-[27px]")}>&gt;&gt;</button>
            <button className={twMerge(dialogButton, "ml-3 w-[72px]")}>Workbook</button>
            <button className={twMerge(dialogButton, "ml-3 w-[54px] border-2 border-[#2f86c4]")}>OK</button>
            <button className={twMerge(dialogButton, "ml-3 w-[54px]")}>Cancel</button>
            <button disabled className={twMerge(dialogButton, "ml-3 w-[54px] bg-[#cccccc] text-[#8a8a8a]")}>
                Apply
            </button>
        </footer>
    </section>
);

const Annotations = () => (
    <svg
        width="100"
        height="130"
        viewBox="410 74 100 130"
        className="pointer-events-none absolute top-[74px] left-[410px]"
        aria-hidden="true"
    >
        <path d="M466 77l-33 33 4 3-19 3 6-18 4 4z" fill="#f03c3c" />
        <path d="M491 190l9-1-6 11z" fill="#f03c3c" />
    </svg>
);

const App = () => (
    <div className="relative flex h-screen min-h-[640px] overflow-hidden bg-[#f0f0f0] font-['Noto_Sans','Noto_Sans_CJK_SC',sans-serif]">
        <div className="flex w-[5px] shrink-0 border-r border-[#7fa6c0] bg-[#0b2444]" />
        <div className="flex min-w-0 flex-1 flex-col">
            <div className="h-[2px] shrink-0 bg-white" />
            <MenuBar />
            <StandardBar />
            <FormatBar />
            <div className="flex min-h-0 flex-1">
                <div className="flex min-w-0 flex-1 flex-col">
                    <main className="flex min-h-0 flex-1 flex-col bg-[#c0c0c0] pt-[102px] pb-[49px]">
                        <div className="flex flex-1 items-start justify-end overflow-hidden bg-white">
                            <Waterfall />
                        </div>
                    </main>
                    <div className="flex h-7 shrink-0 items-center gap-1 overflow-hidden border-b border-[#8f8fa6] bg-gradient-to-b from-[#f8f8ff] to-[#b9b9cd] pl-[651px]">
                        {plots.map((p) => (
                            <Tool key={p.name} name={p.name}>
                                <Icon>{p.art}</Icon>
                            </Tool>
                        ))}
                    </div>
                </div>
                <SideBar />
            </div>
            <footer className="flex h-[14px] shrink-0 justify-end overflow-hidden bg-[#f0f0f4] pt-[2px] pr-3 text-[11px] leading-4 whitespace-nowrap text-[#222]">
                {["& Light Grids", "1:[Book1]Sheet1!Col(C2)[1:1866]", "1:[Graph1]1!1", "Radian"].map((t) => (
                    <span key={t} className="border-r border-[#c4c4cc] pr-px pl-[3px]">
                        {t}
                    </span>
                ))}
            </footer>
        </div>
        <PlotDetails />
        <Annotations />
        <p className="absolute right-5 bottom-[17px] text-[26px] leading-8 text-white [text-shadow:1px_1px_1px_#000,-1px_0_1px_#333,2px_2px_2px_#000]">
            <b>头条</b> @落水无波
        </p>
    </div>
);

export default App;
